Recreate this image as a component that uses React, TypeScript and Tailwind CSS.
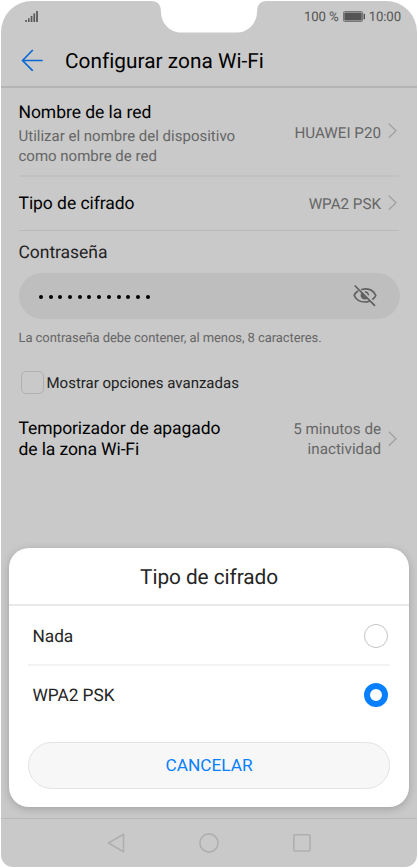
import React from "react";

function Chevron() {
  return (
    <svg className="ml-[7px] shrink-0" width="9" height="16" viewBox="0 0 9 16" fill="none" stroke="#a3a3a3" strokeWidth="1.5">
      <path d="M0.8 0.8 L8 7.8 L0.8 14.8" />
    </svg>
  );
}

function Signal() {
  return (
    <svg width="14" height="13" viewBox="0 0 14 13" fill="#585858">
      <rect x="0.2" y="9" width="1.6" height="2" />
      <rect x="3" y="7.3" width="1.6" height="3.7" />
      <rect x="5.7" y="4.9" width="1.7" height="6.1" />
      <rect x="8.4" y="2.4" width="1.7" height="8.6" />
      <rect x="11.1" y="0" width="1.8" height="11" />
    </svg>
  );
}

function EyeOff() {
  return (
    <svg width="24" height="22" viewBox="0 0 24 22" fill="none" stroke="#606060" strokeWidth="1.7" strokeLinecap="round">
      <path d="M4.6 6.2 C2.9 7.3 1.8 8.7 1.2 10.5 C3.3 15 7.2 17 11.8 17 C13.5 17 14.9 16.7 16.2 16.2" />
      <path d="M8.8 4.5 C15.5 2.9 20.4 5.5 22.8 10.5 C22.1 12 21.1 13.1 19.9 14" />
      <path d="M8.9 7.1 A4.3 4.3 0 1 0 14.9 13.3 Z" fill="#606060" stroke="none" />
      <path d="M12.4 7 C14 7.2 15.1 8.3 15.4 9.8" strokeWidth="1.3" />
      <path d="M2.2 1 L21.5 20.3" />
    </svg>
  );
}

function Dialog() {
  return (
    <div className="absolute left-[9px] top-[548px] flex h-[259px] w-[400px] flex-col rounded-[20px] bg-white text-[#252525] shadow-[0_2px_8px_rgba(0,0,0,0.2)]">
      <h2 className="flex h-[58px] items-center justify-center border-b-2 border-[#e9e9e9] pt-[5px] text-[20.8px] tracking-[-0.06px]">Tipo de cifrado</h2>
      <div className="mx-[19px] flex h-[60px] items-center justify-between border-b-2 border-[#f3f3f3] pl-[4.5px] pr-[2px] pt-[2px] text-[17.3px] tracking-[-0.05px]">
        <span className="pt-[3px]">Nada</span>
        <span className="size-6 rounded-full border border-[#c4c4c4]" />
      </div>
      <div className="mx-[19px] flex h-[57px] items-center justify-between pl-[4.5px] pr-[2px] text-[17.3px] tracking-[-0.05px]">
        <span className="pt-[4px]">WPA2 PSK</span>
        <span className="size-6 rounded-full border-[6px] border-[#087ffe]" />
      </div>
      <button className="mx-[19px] mt-[19px] h-[47px] rounded-full border border-[#e3e3e3] bg-[#f7f7f7] text-[17.3px] tracking-[-0.03px] text-[#087ffe]">CANCELAR</button>
    </div>
  );
}

export default function App() {
  return (
    <div className="relative h-[868px] w-[418px] overflow-hidden bg-white p-px font-['Roboto',sans-serif] whitespace-nowrap text-[#666] [text-rendering:geometricPrecision]">
      <div className="flex h-[866px] flex-col overflow-hidden rounded-t-[31px] rounded-b-[12px] bg-[#c9c9c9]">
        <div className="flex h-[32px] items-center justify-between pl-[24px] pr-[16px] text-[13.2px] text-[#555]">
          <Signal />
          <div className="flex items-center tracking-[-0.1px]">
            <span className="pt-[2px]">100 %</span>
            <svg className="ml-[4px] mr-[4px]" width="22" height="11" viewBox="0 0 22 11" fill="#555">
              <rect x="0.5" y="0.5" width="19" height="10" rx="1" fill="none" stroke="#777" />
              <rect x="1.3" y="1.5" width="17.4" height="8" />
              <rect x="20.5" y="2.8" width="1.5" height="5.4" />
            </svg>
            <span className="pt-[2px]">10:00</span>
          </div>
        </div>
        <header className="flex h-[55px] items-center border-b-2 border-[#b4b4b4] pl-[20px] text-[20.8px] text-black">
          <svg className="mr-[22px]" width="22" height="22" viewBox="0 0 22 22" fill="none" stroke="#0869d4" strokeWidth="1.7" strokeLinecap="round" strokeLinejoin="round">
            <path d="M21 11.5 H1.5 M11.3 1.5 L1.5 11.5 L11.3 21.3" />
          </svg>
          <h1 className="pt-[7px] tracking-[0.03px]">Configurar zona Wi-Fi</h1>
        </header>
        <main className="h-[730px] shrink-0 pl-[17.5px] pr-[18px]">
          <div className="flex h-[89px] items-center justify-between border-b-2 border-[#c2c2c2] pr-[2px]">
            <div>
              <div className="h-[28px] pt-px text-[17.5px] leading-[28px] tracking-[-0.05px] text-black">Nombre de la red</div>
              <div className="text-[15px] leading-[20px]">Utilizar el nombre del dispositivo<br />como nombre de red</div>
            </div>
            <div className="flex items-center text-[15.2px]"><span className="pt-[3px]">HUAWEI P20</span><Chevron /></div>
          </div>
          <div className="flex h-[54px] items-center justify-between border-b border-[#bababa] pr-[2px]">
            <div className="pt-[2px] text-[17.5px] tracking-[-0.05px] text-black">Tipo de cifrado</div>
            <div className="flex items-center text-[15.2px]"><span className="pt-px">WPA2 PSK</span><Chevron /></div>
          </div>
          <div className="pt-[12px] text-[17.5px] leading-[20px] tracking-[-0.05px] text-[#222]">Contraseña</div>
          <div className="mt-[10px] flex h-[46px] w-[381px] items-center justify-between rounded-full bg-[#bebebe] pl-[20px] pr-[23px]">
            <div className="flex gap-[5.7px] pl-[0.5px] pt-px">
              {Array.from({ length: 12 }, (_, i) => <span key={i} className="size-[4px] rounded-full bg-black" />)}
            </div>
            <EyeOff />
          </div>
          <div className="pt-[10px] text-[13px] leading-[20px] tracking-[-0.07px]">La contraseña debe contener, al menos, 8 caracteres.</div>
          <div className="ml-[2.5px] mt-[22px] flex h-[23px] items-center text-[15px] text-[#222]">
            <span className="mr-[2.5px] size-[23px] rounded-[5px] border-[1.5px] border-[#b0b0b0]" />
            <span className="pt-px">Mostrar opciones avanzadas</span>
          </div>
          <div className="mt-[24px] flex items-center justify-between pr-[2px]">
            <div className="pt-px text-[17.5px] leading-[20.5px] tracking-[-0.1px] text-black">Temporizador de apagado<br />de la zona Wi-Fi</div>
            <div className="flex items-center text-right text-[15.2px] leading-[20px]"><span>5 minutos de<br />inactividad</span><Chevron /></div>
          </div>
        </main>
        <nav className="flex h-[49px] items-center border-t border-[#b9b9b9] pl-[106px]">
          <svg width="205" height="20" viewBox="0 0 205 20" fill="none" stroke="#afafaf" strokeWidth="1.6" strokeLinejoin="round">
            <path d="M1.5 10 L16.5 1.2 V18.8 Z" />
            <circle cx="102" cy="10" r="9.1" />
            <rect x="186.8" y="1.8" width="16.2" height="16.2" rx="1" />
          </svg>
        </nav>
      </div>
      <svg className="absolute left-[148px] top-0" width="122" height="34" viewBox="0 0 122 34" fill="white">
        <path d="M0 0 H122 V1 H119 Q109 1 109 12 C109 22 101 32.5 89 32.5 H33 C21 32.5 13 22 13 12 Q13 1 3 1 H0 Z" />
      </svg>
      <Dialog />
    </div>
  );
}
